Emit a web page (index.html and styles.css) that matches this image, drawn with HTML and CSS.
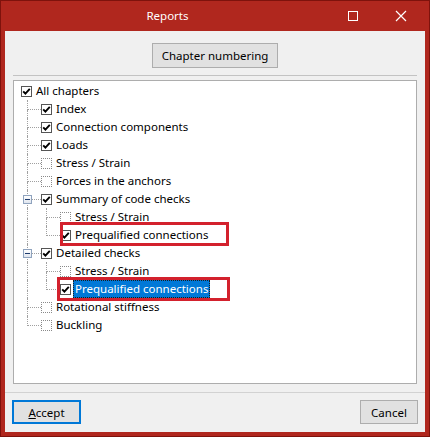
FILE: index.html
```html
<!DOCTYPE html>
<html>
<head>
<meta charset="utf-8">
<link rel="stylesheet" href="styles.css">
</head>
<body>
<div class="window">
  <div class="titlebar">
    <div class="title">Reports</div>
    <div class="tb-btn"><svg width="12" height="12" viewBox="0 0 12 12"><rect x="1.5" y="1.5" width="9" height="9" fill="none" stroke="#fff" stroke-width="1"/></svg></div>
    <div class="tb-btn"><svg width="12" height="12" viewBox="0 0 12 12"><path d="M1 1 L11 11 M11 1 L1 11" stroke="#fff" stroke-width="1.2" fill="none"/></svg></div>
  </div>
  <div class="content">
    <div class="top"><button class="btn chapter">Chapter numbering</button></div>
    <div class="sep"></div>
    <div class="tree">
      <div class="row">
        <span class="cb"><svg width="9" height="9" viewBox="0 0 9 9"><polyline points="1.2,4.3 3.4,6.6 7.8,1.8" fill="none" stroke="#000" stroke-width="1.9"/></svg></span>
        <span class="lbl">All chapters</span>
      </div>
      <div class="row">
        <span class="g g1"><span class="gt"></span><span class="gb on"></span></span>
        <span class="cb"><svg width="9" height="9" viewBox="0 0 9 9"><polyline points="1.2,4.3 3.4,6.6 7.8,1.8" fill="none" stroke="#000" stroke-width="1.9"/></svg></span>
        <span class="lbl">Index</span>
      </div>
      <div class="row">
        <span class="g g1"><span class="gt"></span><span class="gb on"></span></span>
        <span class="cb"><svg width="9" height="9" viewBox="0 0 9 9"><polyline points="1.2,4.3 3.4,6.6 7.8,1.8" fill="none" stroke="#000" stroke-width="1.9"/></svg></span>
        <span class="lbl">Connection components</span>
      </div>
      <div class="row">
        <span class="g g1"><span class="gt"></span><span class="gb on"></span></span>
        <span class="cb"><svg width="9" height="9" viewBox="0 0 9 9"><polyline points="1.2,4.3 3.4,6.6 7.8,1.8" fill="none" stroke="#000" stroke-width="1.9"/></svg></span>
        <span class="lbl">Loads</span>
      </div>
      <div class="row">
        <span class="g g1"><span class="gt"></span><span class="gb on"></span></span>
        <span class="cb off"></span>
        <span class="lbl">Stress / Strain</span>
      </div>
      <div class="row">
        <span class="g g1"><span class="gt"></span><span class="gb on"></span></span>
        <span class="cb off"></span>
        <span class="lbl">Forces in the anchors</span>
      </div>
      <div class="row">
        <span class="g g1"><span class="gt"></span><span class="gb on"></span><span class="exp"><span class="minus"></span></span></span>
        <span class="cb"><svg width="9" height="9" viewBox="0 0 9 9"><polyline points="1.2,4.3 3.4,6.6 7.8,1.8" fill="none" stroke="#000" stroke-width="1.9"/></svg></span>
        <span class="lbl">Summary of code checks</span>
      </div>
      <div class="row">
        <span class="g g1"><span class="gt pass"></span><span class="gb on"></span></span>
        <span class="g g2"><span class="gt"></span><span class="gb on"></span></span>
        <span class="cb off"></span>
        <span class="lbl">Stress / Strain</span>
      </div>
      <div class="row">
        <span class="g g1"><span class="gt pass"></span><span class="gb on"></span></span>
        <span class="g g2"><span class="gt"></span><span class="gb"></span></span>
        <span class="cb"><svg width="9" height="9" viewBox="0 0 9 9"><polyline points="1.2,4.3 3.4,6.6 7.8,1.8" fill="none" stroke="#000" stroke-width="1.9"/></svg></span>
        <span class="lbl">Prequalified connections</span>
        <span class="mark mark-a"></span>
      </div>
      <div class="row">
        <span class="g g1"><span class="gt"></span><span class="gb on"></span><span class="exp"><span class="minus"></span></span></span>
        <span class="cb"><svg width="9" height="9" viewBox="0 0 9 9"><polyline points="1.2,4.3 3.4,6.6 7.8,1.8" fill="none" stroke="#000" stroke-width="1.9"/></svg></span>
        <span class="lbl">Detailed checks</span>
      </div>
      <div class="row">
        <span class="g g1"><span class="gt pass"></span><span class="gb on"></span></span>
        <span class="g g2"><span class="gt"></span><span class="gb on"></span></span>
        <span class="cb off"></span>
        <span class="lbl">Stress / Strain</span>
      </div>
      <div class="row">
        <span class="g g1"><span class="gt pass"></span><span class="gb on"></span></span>
        <span class="g g2"><span class="gt"></span><span class="gb"></span></span>
        <span class="cb"><svg width="9" height="9" viewBox="0 0 9 9"><polyline points="1.2,4.3 3.4,6.6 7.8,1.8" fill="none" stroke="#000" stroke-width="1.9"/></svg></span>
        <span class="lbl sel">Prequalified connections</span>
        <span class="mark mark-b"></span>
      </div>
      <div class="row">
        <span class="g g1"><span class="gt"></span><span class="gb on"></span></span>
        <span class="cb off"></span>
        <span class="lbl">Rotational stiffness</span>
      </div>
      <div class="row">
        <span class="g g1"><span class="gt"></span><span class="gb"></span></span>
        <span class="cb off"></span>
        <span class="lbl">Buckling</span>
      </div>
    </div>
    <div class="footer">
      <button class="btn accept"><u>A</u>ccept</button>
      <button class="btn cancel">Cancel</button>
    </div>
  </div>
</div>
</body>
</html>
```

FILE: styles.css
```css
html, body {
  margin: 0;
  padding: 0;
}
body {
  font-family: "Noto Sans", "Open Sans", sans-serif;
  font-size: 11.5px;
  color: #000;
}
.window {
  width: 430px;
  height: 437px;
  box-sizing: border-box;
  border: 1px solid #7e120c;
  background: #b0271e;
  display: flex;
  flex-direction: column;
}
.titlebar {
  height: 30px;
  display: flex;
  align-items: center;
  padding-right: 4px;
  flex: none;
}
.title {
  flex: 1;
  text-align: center;
  padding-left: 5px;
  color: #fff;
  font-size: 11.5px;
  line-height: 30px;
}
.tb-btn {
  width: 48px;
  height: 30px;
  display: flex;
  align-items: center;
  justify-content: center;
}
.content {
  flex: 1;
  margin: 0 4px 4px 4px;
  background: #f0f0f0;
  display: flex;
  flex-direction: column;
}
.top {
  padding-top: 12px;
  display: flex;
  justify-content: center;
}
.btn {
  font-family: "Noto Sans", "Open Sans", sans-serif;
  font-size: 11.5px;
  color: #000;
  background: #e1e1e1;
  border: 1px solid #adadad;
  box-sizing: border-box;
  padding: 0;
  margin: 0;
}
.chapter {
  width: 126px;
  height: 25px;
}
.sep {
  height: 1px;
  background: #c3c3c3;
  margin: 7px 8px 0 8px;
}
.tree {
  margin: 4px 8px 0 8px;
  height: 304px;
  box-sizing: border-box;
  border: 1px solid #adadad;
  background: #fff;
  padding: 1px 0 0 7px;
}
.row {
  position: relative;
  height: 18px;
  display: flex;
  align-items: center;
}
.g {
  position: relative;
  height: 18px;
  display: flex;
  flex-direction: column;
  flex: none;
}
.g1 { width: 20px; }
.g2 { width: 19px; }
.g1 .gt, .g1 .gb { margin-left: 6px; }
.g2 .gt, .g2 .gb { margin-left: 5px; }
.gt {
  height: 9px;
  border-left: 1px dotted #a0a0a0;
  border-bottom: 1px dotted #a0a0a0;
}
.gt.pass {
  border-bottom: 1px solid transparent;
}
.gb {
  height: 8px;
  border-left: 1px solid transparent;
}
.gb.on {
  border-left: 1px dotted #a0a0a0;
}
.exp {
  position: absolute;
  left: 2px;
  top: 5px;
  width: 9px;
  height: 9px;
  box-sizing: border-box;
  border: 1px solid #8fa3be;
  background: linear-gradient(#ffffff, #dfe5ee);
  display: flex;
  align-items: center;
  justify-content: center;
}
.minus {
  width: 5px;
  height: 1px;
  background: #1f3c6e;
}
.cb {
  width: 11px;
  height: 11px;
  box-sizing: border-box;
  border: 1px solid #555;
  background: #fff;
  flex: none;
  display: flex;
  align-items: center;
  justify-content: center;
  margin-right: 2px;
}
.cb.off {
  border: 1px dotted #8a8a8a;
}
.lbl {
  padding: 0 2px;
  height: 18px;
  line-height: 18px;
  white-space: nowrap;
  box-sizing: border-box;
}
.lbl.sel {
  background: #0078d7;
  color: #fff;
  outline: 1px dotted #1b1b1b;
  outline-offset: -1px;
}
.mark {
  position: absolute;
  border: 3px solid #d3212d;
  box-sizing: border-box;
  height: 24px;
}
.mark-a {
  left: 39px;
  top: -4px;
  width: 169px;
}
.mark-b {
  left: 36px;
  top: -3px;
  width: 173px;
}
.footer {
  margin-top: 8px;
  border-top: 1px solid #d2d2d2;
  padding: 7px 7px 0 7px;
  display: flex;
  justify-content: space-between;
}
.accept {
  width: 69px;
  height: 24px;
  border: 2px solid #0078d7;
}
.cancel {
  width: 58px;
  height: 24px;
}
```
